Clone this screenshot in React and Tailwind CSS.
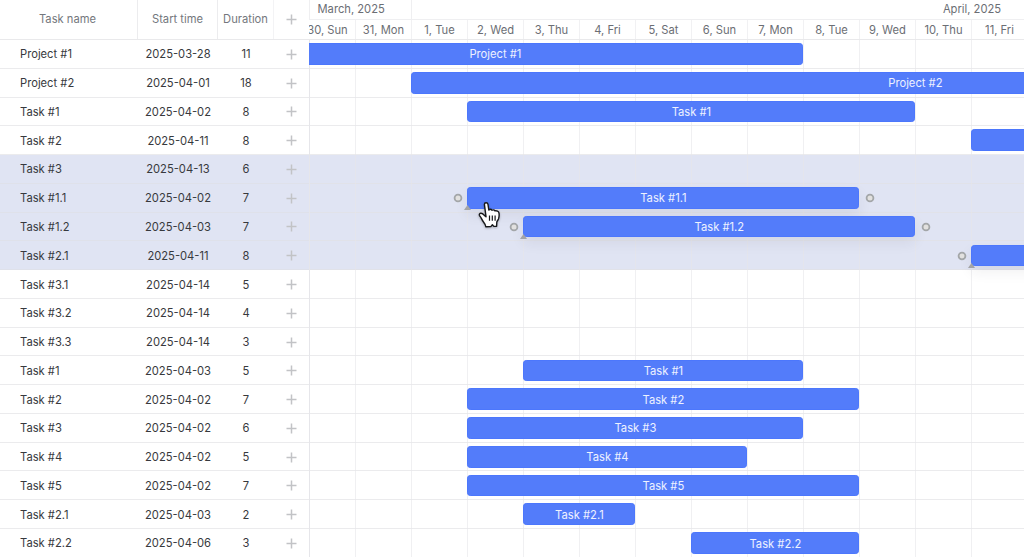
import React from "react";

const DAY = 56;
const ORIGIN = -9.5;

const days = [
  "30, Sun", "31, Mon", "1, Tue", "2, Wed", "3, Thu", "4, Fri", "5, Sat",
  "6, Sun", "7, Mon", "8, Tue", "9, Wed", "10, Thu", "11, Fri",
];

const tasks = [
  { name: "Project #1", start: "2025-03-28", duration: 11, day: -2 },
  { name: "Project #2", start: "2025-04-01", duration: 18, day: 2 },
  { name: "Task #1", start: "2025-04-02", duration: 8, day: 3 },
  { name: "Task #2", start: "2025-04-11", duration: 8, day: 12 },
  { name: "Task #3", start: "2025-04-13", duration: 6, day: 14, selected: true },
  { name: "Task #1.1", start: "2025-04-02", duration: 7, day: 3, selected: true },
  { name: "Task #1.2", start: "2025-04-03", duration: 7, day: 4, selected: true },
  { name: "Task #2.1", start: "2025-04-11", duration: 8, day: 12, selected: true },
  { name: "Task #3.1", start: "2025-04-14", duration: 5, day: 15 },
  { name: "Task #3.2", start: "2025-04-14", duration: 4, day: 15 },
  { name: "Task #3.3", start: "2025-04-14", duration: 3, day: 15 },
  { name: "Task #1", start: "2025-04-03", duration: 5, day: 4 },
  { name: "Task #2", start: "2025-04-02", duration: 7, day: 3 },
  { name: "Task #3", start: "2025-04-02", duration: 6, day: 3 },
  { name: "Task #4", start: "2025-04-02", duration: 5, day: 3 },
  { name: "Task #5", start: "2025-04-02", duration: 7, day: 3 },
  { name: "Task #2.1", start: "2025-04-03", duration: 2, day: 4 },
  { name: "Task #2.2", start: "2025-04-06", duration: 3, day: 7 },
];

function Plus() {
  return (
    <svg className="h-[11px] w-[11px]" viewBox="0 0 11 11" fill="none" stroke="#c2c3c6" strokeWidth="1.5">
      <path d="M5.5 0.5v10M0.5 5.5h10" />
    </svg>
  );
}

function LinkPoint({ side }) {
  return (
    <svg
      className={"absolute top-[5px] h-[10px] w-[10px] " + (side === "left" ? "-left-[15.800px]" : "-right-[16.4px]")}
      viewBox="0 0 10 10"
    >
      <circle cx="5" cy="5" r="3.4" fill="#e2e1df" stroke="#a3a6a8" strokeWidth="1.8" />
    </svg>
  );
}

function Bar({ task }) {
  return (
    <div
      className={
        "relative mt-[3.2px] flex h-[21.6px] shrink-0 items-center justify-center rounded-[3.2px] border border-[#4c77fc] bg-[#537cfa] text-white/90 " +
        (task.selected ? "shadow-[0_6px_14px_rgba(44,47,60,0.07)]" : "")
      }
      style={{ marginLeft: ORIGIN + task.day * DAY - 0.1, width: task.duration * DAY }}
    >
      <span className="pt-px">{task.name}</span>
      {task.selected && (
        <>
          <LinkPoint side="left" />
          <LinkPoint side="right" />
          <svg className="absolute -bottom-[2.4px] -left-[4.5px] h-[5px] w-[7px]" viewBox="0 0 7 5">
            <path d="M3.5 0L7 5H0z" fill="#a3a4a6" />
          </svg>
        </>
      )}
    </div>
  );
}

function HandCursor() {
  return (
    <svg className="absolute left-[478px] top-[201px] h-[28px] w-[24px] drop-shadow-[0_1px_1px_rgba(0,0,0,0.25)]" viewBox="0 0 24 28">
      <path
        d="M6.4 3.4c0-1 .8-1.7 1.7-1.7s1.7.7 1.9 1.7l.8 5.6c.4-.5.9-.7 1.5-.7.8 0 1.3.4 1.6 1 .4-.3.9-.4 1.4-.4.8 0 1.3.4 1.6 1 1.6-.4 3.9.2 4.1 2.2.3 2 .1 4.2-.5 5.9-.6 1.4-1.500 2-1.700 3.200l-.2 4-2.800.2-1.400-1.700-1.600 1.900-5 .1c-.2-2.300-1.300-3.500-2.300-4.700-1.200-1.500-1.700-3-2.400-4.200-.6-1-1.400-1.700-1.700-2.500-.3-1 .4-1.900 1.400-2 1.300-.1 2.400.7 3.300 1.800l1.900 1.600z"
        fill="white"
        stroke="#17181b"
        strokeWidth="1.4"
        strokeLinejoin="round"
      />
      <path d="M11.5 14.5v5.3M14.3 14.5v5.3M17.1 14.5v5.3" stroke="#17181b" strokeWidth="1.2" fill="none" />
    </svg>
  );
}

const columns = "grid grid-cols-[138px_80px_56px_35px]";

export default function App() {
  return (
    <div className="relative flex h-[557px] w-[1024px] overflow-hidden bg-white font-['Inter',sans-serif] text-[11.2px] leading-4 text-[#37393d]">
      <div className="flex w-[309px] shrink-0 flex-col">
        <div className={columns + " h-[40px] shrink-0 border-b border-[#e9e9eb] text-[#74777d]"}>
          <div className="flex items-center justify-center border-r border-[#ececee] pr-0.5 pb-px">Task name</div>
          <div className="flex items-center justify-center border-r border-[#ececee] pb-px">Start time</div>
          <div className="flex items-center justify-center border-r border-[#f3f3f5] pb-px">Duration</div>
          <div className="flex items-center justify-center pb-px"><Plus /></div>
        </div>
        {tasks.map((task, i) => (
          <div
            key={i}
            className={
              columns + " h-[28.78px] shrink-0 items-center border-b " +
              (task.selected ? "border-[#dfe1ea] bg-[#e0e4f3]" : "border-[#ebebed]")
            }
          >
            <div className="pt-px pl-5">{task.name}</div>
            <div className="pt-px text-center">{task.start}</div>
            <div className="pt-px text-center">{task.duration}</div>
            <div className="flex justify-center pt-px"><Plus /></div>
          </div>
        ))}
      </div>

      <div className="relative flex w-[715px] shrink-0 flex-col overflow-hidden">
        <div className="flex h-[40px] shrink-0 flex-col border-b border-[#e9e9eb] text-[#6b6e74]">
          <div className="flex h-[20px] shrink-0 items-center border-b border-[#efeff1]">
            <div className="flex h-full w-[103px] shrink-0 items-center border-r border-l border-[#efeff1] pb-px pl-[7.5px]">March, 2025</div>
            <div className="w-[1120px] shrink-0 pb-px text-center">April, 2025</div>
          </div>
          <div className="-ml-[9px] flex flex-1">
            {days.map((day) => (
              <div key={day} className="flex w-14 shrink-0 items-center justify-center border-r border-[#f1f1f3]">{day}</div>
            ))}
          </div>
        </div>
        <div className="relative flex-1">
          {tasks.map((task, i) => (
            <div
              key={i}
              className={
                "flex h-[28.78px] border-b " +
                (task.selected ? "border-[#e1e2e9] bg-[#e0e4f3]" : "border-[#ebebed]")
              }
            />
          ))}
          <div className="absolute inset-y-0 left-0 flex border-l border-[#e6e6ea]">
            <div className="-ml-[10px] flex">
              {days.map((day) => (
                <div key={day} className="w-14 shrink-0 border-r border-[#e6e6e9]/60" />
              ))}
            </div>
          </div>
          <div className="absolute inset-x-0 top-0">
            {tasks.map((task, i) => (
              <div key={i} className="flex h-[28.78px] items-start">
                {task.day < days.length && <Bar task={task} />}
              </div>
            ))}
          </div>
        </div>
      </div>
      <HandCursor />
    </div>
  );
}
